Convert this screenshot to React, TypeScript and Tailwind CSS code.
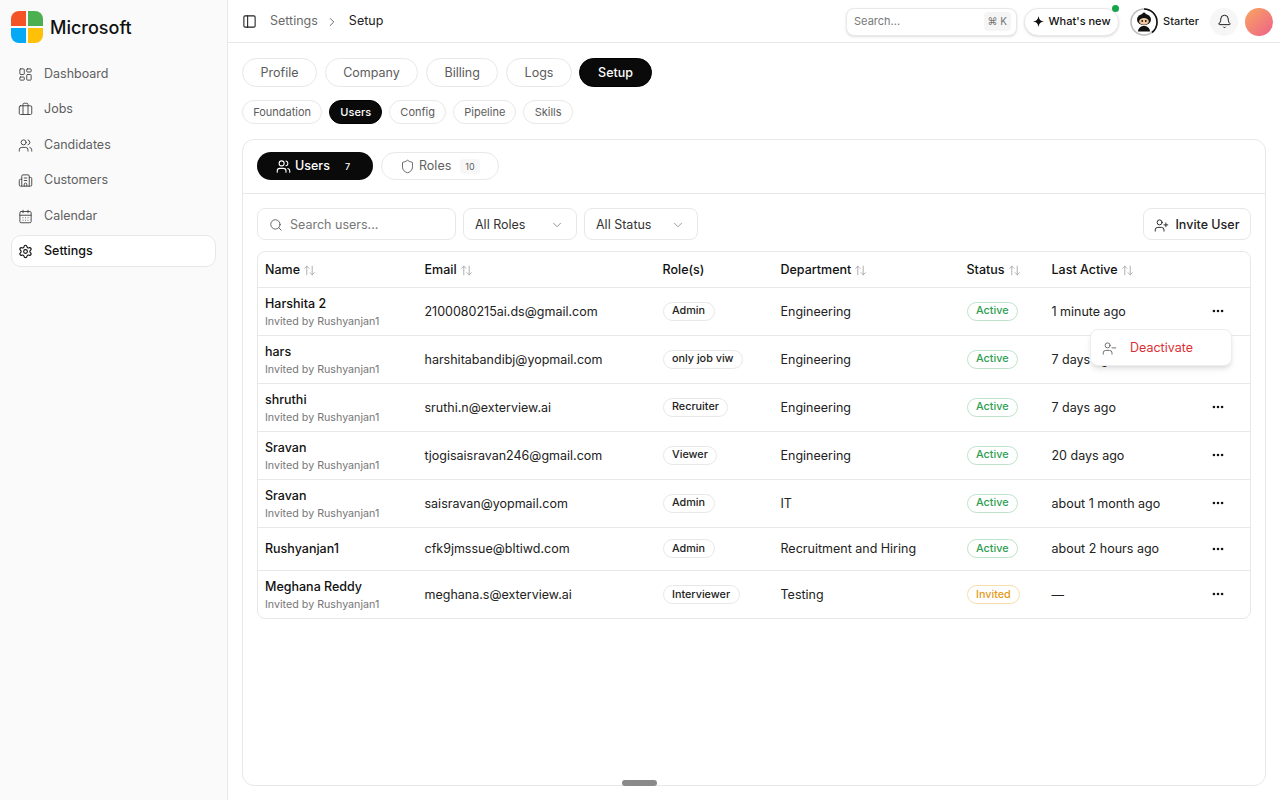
import {
  Bell,
  Briefcase,
  Building2,
  CalendarDays,
  ChevronDown,
  ChevronRight,
  Ellipsis,
  LayoutDashboard,
  PanelLeft,
  Search,
  Settings,
  Shield,
  UserMinus,
  UserPlus,
  Users,
  ArrowUpDown,
} from 'lucide-react';

const font = { fontFamily: 'Inter, "Liberation Sans", sans-serif' };

const navItems = [
  { label: 'Dashboard', icon: LayoutDashboard },
  { label: 'Jobs', icon: Briefcase },
  { label: 'Candidates', icon: Users },
  { label: 'Customers', icon: Building2 },
  { label: 'Calendar', icon: CalendarDays },
];

const rows = [
  { name: 'Harshita 2', invited: true, email: '2100080215ai.ds@gmail.com', role: 'Admin', dept: 'Engineering', status: 'Active', last: '1 minute ago' },
  { name: 'hars', invited: true, email: 'harshitabandibj@yopmail.com', role: 'only job viw', dept: 'Engineering', status: 'Active', last: '7 days ago' },
  { name: 'shruthi', invited: true, email: 'sruthi.n@exterview.ai', role: 'Recruiter', dept: 'Engineering', status: 'Active', last: '7 days ago' },
  { name: 'Sravan', invited: true, email: 'tjogisaisravan246@gmail.com', role: 'Viewer', dept: 'Engineering', status: 'Active', last: '20 days ago' },
  { name: 'Sravan', invited: true, email: 'saisravan@yopmail.com', role: 'Admin', dept: 'IT', status: 'Active', last: 'about 1 month ago' },
  { name: 'Rushyanjan1', invited: false, email: 'cfk9jmssue@bltiwd.com', role: 'Admin', dept: 'Recruitment and Hiring', status: 'Active', last: 'about 2 hours ago' },
  { name: 'Meghana Reddy', invited: true, email: 'meghana.s@exterview.ai', role: 'Interviewer', dept: 'Testing', status: 'Invited', last: '—' },
];

function Logo() {
  return (
    <div className="grid h-8 w-8 shrink-0 grid-cols-2 gap-[2px] overflow-hidden rounded-lg">
      <div className="bg-[#f35325]" />
      <div className="bg-[#4caf50]" />
      <div className="bg-[#03a9f4]" />
      <div className="bg-[#ffc107]" />
    </div>
  );
}

function Mascot() {
  return (
    <svg viewBox="0 0 28 28" className="h-7 w-7 shrink-0">
      <circle cx="14" cy="14" r="13" fill="#fff" stroke="#bdbdbd" strokeWidth="1.6" />
      <path d="M14 1 A13 13 0 0 1 27 14 A13 13 0 0 1 22 24.5" fill="none" stroke="#111" strokeWidth="1.6" />
      <circle cx="14" cy="6.2" r="1.8" fill="#111" />
      <ellipse cx="14" cy="11.5" rx="7" ry="5.8" fill="#111" />
      <ellipse cx="14" cy="13.4" rx="4.8" ry="3.4" fill="#f2c9a1" />
      <circle cx="12.2" cy="13" r="0.9" fill="#111" />
      <circle cx="15.8" cy="13" r="0.9" fill="#111" />
      <path d="M8 23.5 C8 16 20 16 20 23.5 Z" fill="#111" />
    </svg>
  );
}

function SortHead({ label, sortable = true }: { label: string; sortable?: boolean }) {
  return (
    <span className="inline-flex items-center gap-[3px]">
      {label}
      {sortable && <ArrowUpDown className="h-[13px] w-[13px] text-[#a0a0a0]" strokeWidth={1.5} />}
    </span>
  );
}

function Pill({ label, active, small }: { label: string; active?: boolean; small?: boolean }) {
  return (
    <div
      className={`flex items-center rounded-full border ${small ? 'h-6 px-[10.15px] text-[11px]' : 'h-[29px] px-[17.6px] pt-[1px] text-[12.5px]'} ${
        active ? 'border-black bg-[#0a0a0a] font-medium text-white' : 'border-[#e8e8e8] bg-white text-[#5c5c5c]'
      }`}
    >
      {label}
    </div>
  );
}

export default function App() {
  return (
    <div style={font} className="flex h-[800px] w-[1280px] overflow-hidden bg-white text-[#111]">
      <aside className="flex w-[228px] shrink-0 flex-col border-r border-[#e8e8e8] bg-[#fafafa] px-[11px] pt-[11px]">
        <div className="flex items-center gap-[7px]">
          <Logo />
          <span className="text-[18px] font-medium">Microsoft</span>
        </div>
        <nav className="mt-[15px] flex flex-col gap-[3.5px]">
          {navItems.map((item) => (
            <div key={item.label} className="flex h-8 items-center gap-[11px] px-[7px] text-[12.5px] text-[#5f5f5f]">
              <item.icon className="h-[15px] w-[15px] shrink-0 text-[#444]" strokeWidth={1.5} />
              {item.label}
            </div>
          ))}
          <div className="-mt-[1px] flex h-8 items-center gap-[11px] rounded-[10px] border border-[#e8e8e8] bg-white px-[6px] pt-[1px] text-[12.5px] font-medium text-[#111]">
            <Settings className="h-[15px] w-[15px] shrink-0" strokeWidth={1.75} />
            Settings
          </div>
        </nav>
      </aside>

      <div className="flex min-w-0 flex-1 flex-col">
        <header className="flex h-[43px] shrink-0 items-center border-b border-[#e8e8e8] pl-[14px] pr-[7px] pt-[1px]">
          <PanelLeft className="h-[15px] w-[15px] text-[#222]" strokeWidth={1.75} />
          <span className="ml-[13px] text-[12.5px] text-[#6b6b6b]">Settings</span>
          <ChevronRight className="mx-[7px] h-[14px] w-[14px] text-[#555]" strokeWidth={1.5} />
          <span className="ml-[3px] text-[12.5px] text-[#222]">Setup</span>

          <div className="ml-auto flex items-center">
            <div className="flex h-7 w-[171px] items-center justify-between rounded-lg border border-[#e8e8e8] bg-white pl-[7px] pr-[5px] text-[11px] text-[#777] shadow-sm">
              Search...
              <span className="rounded bg-[#f5f5f5] px-1 py-[2px] text-[10px] text-[#777]">⌘ K</span>
            </div>
            <div className="relative ml-[7px] flex h-7 w-[95px] items-center justify-center gap-[5px] rounded-full border border-[#e8e8e8] bg-white text-[11px] font-medium shadow-sm">
              <svg viewBox="0 0 12 12" className="h-[11px] w-[11px]">
                <path d="M6 0 C6.5 3.8 8.2 5.5 12 6 C8.2 6.5 6.5 8.2 6 12 C5.5 8.2 3.8 6.5 0 6 C3.8 5.5 5.5 3.8 6 0Z" fill="#111" />
              </svg>
              What's new
              <span className="absolute -right-[1px] -top-[4px] h-[7px] w-[7px] rounded-full bg-[#16a34a]" />
            </div>
            <div className="ml-[11px] flex items-center gap-[5px]">
              <Mascot />
              <span className="text-[11px] font-medium text-[#222]">Starter</span>
            </div>
            <div className="ml-[11px] flex h-7 w-7 items-center justify-center rounded-full bg-[#f6f6f6]">
              <Bell className="h-[15px] w-[15px]" strokeWidth={1.5} />
            </div>
            <div className="ml-[7px] h-7 w-7 rounded-full bg-gradient-to-br from-[#f9a45c] to-[#ec5f86]" />
          </div>
        </header>

        <main className="flex min-h-0 flex-1 flex-col px-[14px] pb-[14px] pt-[15px]">
          <div className="flex gap-[7.5px]">
            <Pill label="Profile" />
            <Pill label="Company" />
            <Pill label="Billing" />
            <Pill label="Logs" />
            <Pill label="Setup" active />
          </div>
          <div className="mt-[13px] flex gap-[7px]">
            <Pill small label="Foundation" />
            <Pill small label="Users" active />
            <Pill small label="Config" />
            <Pill small label="Pipeline" />
            <Pill small label="Skills" />
          </div>

          <section className="relative mt-[15px] flex-1 rounded-xl border border-[#e8e8e8] bg-white">
            <div className="flex h-[54px] items-center gap-2 border-b border-[#e8e8e8] px-[14px] pb-[2px]">
              <div className="flex h-7 w-[116px] items-center rounded-full bg-[#0a0a0a] pl-[19px] pt-[2px] text-[12.5px] font-medium text-white">
                <Users className="h-[15px] w-[15px]" strokeWidth={1.75} />
                <span className="ml-[4px]">Users</span>
                <span className="ml-[15px] text-[9px]">7</span>
              </div>
              <div className="flex h-7 w-[118px] items-center rounded-full border border-[#e8e8e8] bg-white pl-[18px] pt-[2px] text-[12.5px] text-[#5f5f5f]">
                <Shield className="h-[15px] w-[15px]" strokeWidth={1.5} />
                <span className="ml-[4px]">Roles</span>
                <span className="ml-[9px] rounded bg-[#f7f7f7] px-[5px] py-[1px] text-[9px]">10</span>
              </div>
            </div>

            <div className="px-[14px] pt-[14px]">
              <div className="flex items-center gap-[7px]">
                <div className="flex h-8 w-[199px] items-center rounded-lg border border-[#e8e8e8] px-[11px] pt-[2px] text-[12.5px] text-[#777]">
                  <Search className="h-[14px] w-[14px] text-[#555]" strokeWidth={1.5} />
                  <span className="ml-[7px]">Search users...</span>
                </div>
                <div className="flex h-8 w-[114px] items-center justify-between rounded-lg border border-[#e8e8e8] pl-[11px] pr-[12px] pt-[2px] text-[12.5px] text-[#333]">
                  All Roles
                  <ChevronDown className="h-[14px] w-[14px] text-[#8a8a8a]" strokeWidth={1.5} />
                </div>
                <div className="flex h-8 w-[114px] items-center justify-between rounded-lg border border-[#e8e8e8] pl-[11px] pr-[12px] pt-[2px] text-[12.5px] text-[#333]">
                  All Status
                  <ChevronDown className="h-[14px] w-[14px] text-[#8a8a8a]" strokeWidth={1.5} />
                </div>
                <div className="ml-auto flex h-8 w-[108px] items-center justify-center gap-[6px] rounded-lg border border-[#e8e8e8] pt-[2px] text-[12.5px] font-medium text-[#222]">
                  <UserPlus className="h-[15px] w-[15px]" strokeWidth={1.5} />
                  Invite User
                </div>
              </div>

              <div className="relative mt-[11px] overflow-visible rounded-lg border border-[#e8e8e8]">
                <table className="w-full table-fixed border-collapse text-[12.5px]">
                  <colgroup>
                    <col className="w-[159.5px]" />
                    <col className="w-[238px]" />
                    <col className="w-[118px]" />
                    <col className="w-[186px]" />
                    <col className="w-[85px]" />
                    <col className="w-[149px]" />
                    <col />
                  </colgroup>
                  <thead>
                    <tr className="h-[35px] border-b border-[#e8e8e8] text-left">
                      <th className="px-[7px] pt-[2px] font-medium"><SortHead label="Name" /></th>
                      <th className="px-[7px] pt-[2px] font-medium"><SortHead label="Email" /></th>
                      <th className="px-[7px] pt-[2px] font-medium"><SortHead label="Role(s)" sortable={false} /></th>
                      <th className="px-[7px] pt-[2px] font-medium"><SortHead label="Department" /></th>
                      <th className="px-[7px] pt-[2px] font-medium"><SortHead label="Status" /></th>
                      <th className="px-[7px] pt-[2px] font-medium"><SortHead label="Last Active" /></th>
                      <th />
                    </tr>
                  </thead>
                  <tbody>
                    {rows.map((row, i) => (
                      <tr
                        key={row.email}
                        className={`${row.invited ? 'h-12' : 'h-[43px]'} ${i < rows.length - 1 ? 'border-b border-[#e8e8e8]' : ''}`}
                      >
                        <td className={`px-[7px] ${row.invited ? 'pt-[2px]' : ''}`}>
                          <div className="font-medium leading-[17px]">{row.name}</div>
                          {row.invited && <div className="mt-[2px] text-[10.7px] leading-[16px] text-[#777]">Invited by Rushyanjan1</div>}
                        </td>
                        <td className="truncate px-[7px] pt-[2px] text-[#222]">{row.email}</td>
                        <td className="px-[7px]">
                          <span className="inline-flex h-[19px] items-center rounded-full border border-[#e8e8e8] px-[8.5px] pt-[1px] text-[10.8px] font-medium text-[#222]">
                            {row.role}
                          </span>
                        </td>
                        <td className="px-[7px] pt-[2px] text-[#222]">{row.dept}</td>
                        <td className="px-[7px]">
                          <span
                            className={`inline-flex h-[19px] items-center rounded-full border px-[8.5px] pt-[1px] text-[10.8px] font-medium ${
                              row.status === 'Active' ? 'border-[#bfe3c9] text-[#2e9e52]' : 'border-[#f6dfa8] text-[#e39a16]'
                            }`}
                          >
                            {row.status}
                          </span>
                        </td>
                        <td className="px-[7px] pt-[2px] text-[#222]">{row.last}</td>
                        <td>
                          <Ellipsis className="ml-[17px] h-[14px] w-[14px] text-[#111]" strokeWidth={2.5} />
                        </td>
                      </tr>
                    ))}
                  </tbody>
                </table>

                <div className="absolute left-[832px] top-[77px] flex h-[37px] w-[142px] items-center gap-[13px] rounded-lg border border-[#eeeeee] bg-white pl-[11px] pt-[1px] text-[12.5px] text-[#dc2f35] shadow-md">
                  <UserMinus className="h-[15px] w-[15px] text-[#666]" strokeWidth={1.5} />
                  Deactivate
                </div>
              </div>
            </div>

            <div className="absolute -bottom-[1px] left-[379px] h-[6px] w-[35px] rounded-full bg-[#8a8a8a]" />
          </section>
        </main>
      </div>
    </div>
  );
}
